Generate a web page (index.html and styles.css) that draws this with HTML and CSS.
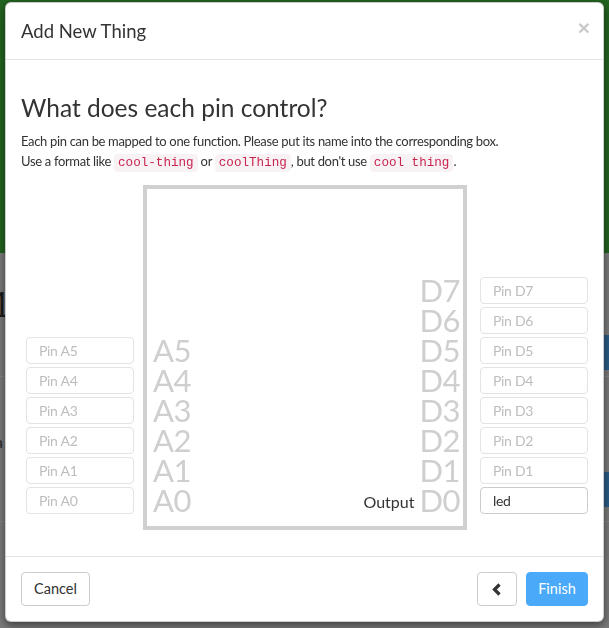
FILE: index.html
```html
<!DOCTYPE html>
<html lang="en">
<head>
<meta charset="utf-8">
<title>Add New Thing</title>
<link rel="stylesheet" href="styles.css">
</head>
<body>
<div class="page">
  <div class="hero"></div>
  <div class="content">
    <div class="bg-row bg-row-1">
      <span class="bg-num">1</span>
      <span class="bg-bar"></span>
    </div>
    <div class="bg-row bg-row-2">
      <span class="bg-letter">a</span>
      <span class="bg-bar"></span>
    </div>
    <div class="bg-row bg-row-3"></div>
  </div>
</div>

<div class="backdrop">
  <div class="modal">
    <div class="modal-header">
      <h4 class="modal-title">Add New Thing</h4>
      <button class="close" type="button">×</button>
    </div>
    <div class="modal-body">
      <h3 class="heading">What does each pin control?</h3>
      <p class="intro">Each pin can be mapped to one function. Please put its name into the corresponding box.<br>Use a format like <code>cool-thing</code> or <code>coolThing</code>, but don't use <code>cool thing</code>.</p>
      <div class="diagram">
        <div class="pins pins-left">
          <div class="pin-row"><input class="pin-input" placeholder="Pin A5"></div>
          <div class="pin-row"><input class="pin-input" placeholder="Pin A4"></div>
          <div class="pin-row"><input class="pin-input" placeholder="Pin A3"></div>
          <div class="pin-row"><input class="pin-input" placeholder="Pin A2"></div>
          <div class="pin-row"><input class="pin-input" placeholder="Pin A1"></div>
          <div class="pin-row"><input class="pin-input" placeholder="Pin A0"></div>
        </div>
        <div class="chip">
          <div class="labels labels-left">
            <div class="label">A5</div>
            <div class="label">A4</div>
            <div class="label">A3</div>
            <div class="label">A2</div>
            <div class="label">A1</div>
            <div class="label">A0</div>
          </div>
          <div class="labels labels-right">
            <div class="label">D7</div>
            <div class="label">D6</div>
            <div class="label">D5</div>
            <div class="label">D4</div>
            <div class="label">D3</div>
            <div class="label">D2</div>
            <div class="label">D1</div>
            <div class="label"><span class="func">Output</span>D0</div>
          </div>
        </div>
        <div class="pins pins-right">
          <div class="pin-row"><input class="pin-input" placeholder="Pin D7"></div>
          <div class="pin-row"><input class="pin-input" placeholder="Pin D6"></div>
          <div class="pin-row"><input class="pin-input" placeholder="Pin D5"></div>
          <div class="pin-row"><input class="pin-input" placeholder="Pin D4"></div>
          <div class="pin-row"><input class="pin-input" placeholder="Pin D3"></div>
          <div class="pin-row"><input class="pin-input" placeholder="Pin D2"></div>
          <div class="pin-row"><input class="pin-input" placeholder="Pin D1"></div>
          <div class="pin-row"><input class="pin-input filled" placeholder="Pin D0" value="led"></div>
        </div>
      </div>
    </div>
    <div class="modal-footer">
      <button class="btn" type="button">Cancel</button>
      <div class="footer-right">
        <button class="btn btn-back" type="button" aria-label="Back">
          <svg class="chev" width="10" height="13" viewBox="0 0 10 13"><polyline points="7.5,1.5 2.5,6.5 7.5,11.5" fill="none" stroke="#333" stroke-width="3.2" stroke-linejoin="miter"/></svg>
        </button>
        <button class="btn btn-primary" type="button">Finish</button>
      </div>
    </div>
  </div>
</div>
</body>
</html>
```
FILE: styles.css
```css
* { box-sizing: border-box; }

html, body {
  margin: 0;
  height: 100%;
  overflow: hidden;
}

body {
  font-family: Lato, "Liberation Sans", sans-serif;
  font-size: 14px;
  color: #333;
  background: #7a7a7a;
}

/* ---------- dimmed page behind the modal ---------- */
.page {
  display: flex;
  flex-direction: column;
  height: 100%;
}

.hero {
  height: 253px;
  background: #236321;
  flex: none;
}

.content {
  flex: 1;
  display: flex;
  flex-direction: column;
}

.bg-row {
  display: flex;
  justify-content: space-between;
  align-items: flex-start;
  border-bottom: 1px solid #858585;
}

.bg-row-1 { height: 124px; padding-top: 82px; }
.bg-row-2 { height: 145px; padding-top: 95px; }
.bg-row-3 { flex: 1; border-bottom: 0; }

.bg-num {
  font-size: 34px;
  line-height: 30px;
  color: #1c1c1c;
  margin-left: -9px;
  margin-top: -46px;
}

.bg-letter {
  font-size: 16px;
  line-height: 16px;
  color: #2a2a2a;
  margin-left: -5px;
  margin-top: -38px;
}

.bg-bar {
  width: 20px;
  height: 35px;
  background: #2b5b87;
}

/* ---------- modal ---------- */
.backdrop {
  position: fixed;
  inset: 0;
  padding: 2px 5px 0 5px;
}

.modal {
  width: 599px;
  background: #fff;
  border: 1px solid rgba(0, 0, 0, 0.2);
  border-radius: 6px;
  box-shadow: 0 3px 9px rgba(0, 0, 0, 0.5);
}

.modal-header {
  display: flex;
  justify-content: space-between;
  align-items: flex-start;
  padding: 15px;
  border-bottom: 1px solid #e5e5e5;
}

.modal-title {
  margin: 0;
  font-size: 18.5px;
  font-weight: 400;
  line-height: 26px;
  color: #333;
}

.close {
  border: 0;
  background: none;
  padding: 0;
  margin-top: -1px;
  margin-right: -2px;
  font-family: "Liberation Sans", Arial, sans-serif;
  font-size: 21px;
  font-weight: bold;
  line-height: 21px;
  color: #cacaca;
  cursor: pointer;
}

.modal-body {
  padding: 15px;
}

.heading {
  margin: 20px 0 10px;
  font-size: 24.5px;
  font-weight: 400;
  line-height: 26px;
  color: #333;
}

.intro {
  margin: 0 0 10px;
  font-size: 13px;
  letter-spacing: -0.33px;
  line-height: 20px;
}

code {
  font-family: "Liberation Mono", "DejaVu Sans Mono", monospace;
  font-size: 12.6px;
  line-height: 1;
  letter-spacing: 0;
  padding: 2px 4px;
  color: #c7254e;
  background: #f9f2f4;
  border-radius: 4px;
}

/* ---------- pin diagram ---------- */
.diagram {
  display: flex;
  justify-content: flex-end;
  align-items: flex-end;
  margin: 14px 0 11px;
}

.pins {
  width: 108px;
  display: flex;
  flex-direction: column;
  padding-bottom: 15px;
}

.pins-left { margin-right: 9px; }
.pins-right { margin-left: 13px; }

.pin-row {
  height: 30px;
  padding-top: 2px;
}

.pin-input {
  display: block;
  width: 108px;
  height: 27px;
  padding: 0 12px;
  border: 1px solid #e3e3e3;
  border-radius: 4px;
  font-family: Lato, "Liberation Sans", sans-serif;
  font-size: 14px;
  letter-spacing: -0.3px;
  color: #333;
  background: #fff;
  outline: none;
}

.pin-input::placeholder {
  color: #bdbdbd;
  opacity: 1;
}

.pin-input.filled {
  border-color: #cccccc;
}

.chip {
  width: 324px;
  height: 345px;
  border: 4px solid #d0d0d0;
  display: flex;
  justify-content: space-between;
  align-items: flex-end;
  padding: 0 3px 11px 6px;
}

.labels {
  display: flex;
  flex-direction: column;
}

.labels-right { text-align: right; }

.label {
  height: 30px;
  font-size: 31px;
  line-height: 30px;
  color: #cfcfcf;
  letter-spacing: -0.5px;
}

.func {
  display: inline-block;
  font-size: 16px;
  letter-spacing: 0;
  color: #333;
  margin-right: 5px;
  vertical-align: 4px;
}

/* ---------- footer ---------- */
.modal-footer {
  display: flex;
  justify-content: space-between;
  align-items: center;
  padding: 15px;
  border-top: 1px solid #e5e5e5;
}

.footer-right {
  display: flex;
  gap: 9px;
}

.btn {
  height: 34px;
  padding: 0 12px;
  border: 1px solid #cccccc;
  border-radius: 4px;
  background: #fff;
  font-family: Lato, "Liberation Sans", sans-serif;
  font-size: 14.5px;
  color: #333;
  line-height: 32px;
  cursor: pointer;
}

.btn-back {
  width: 40px;
  display: flex;
  align-items: center;
  justify-content: center;
  padding: 0;
}

.chev { display: block; }

.btn-primary {
  width: 62px;
  padding: 0;
  background: #4aa9f8;
  border-color: #4aa9f8;
  color: #fff;
}
```
